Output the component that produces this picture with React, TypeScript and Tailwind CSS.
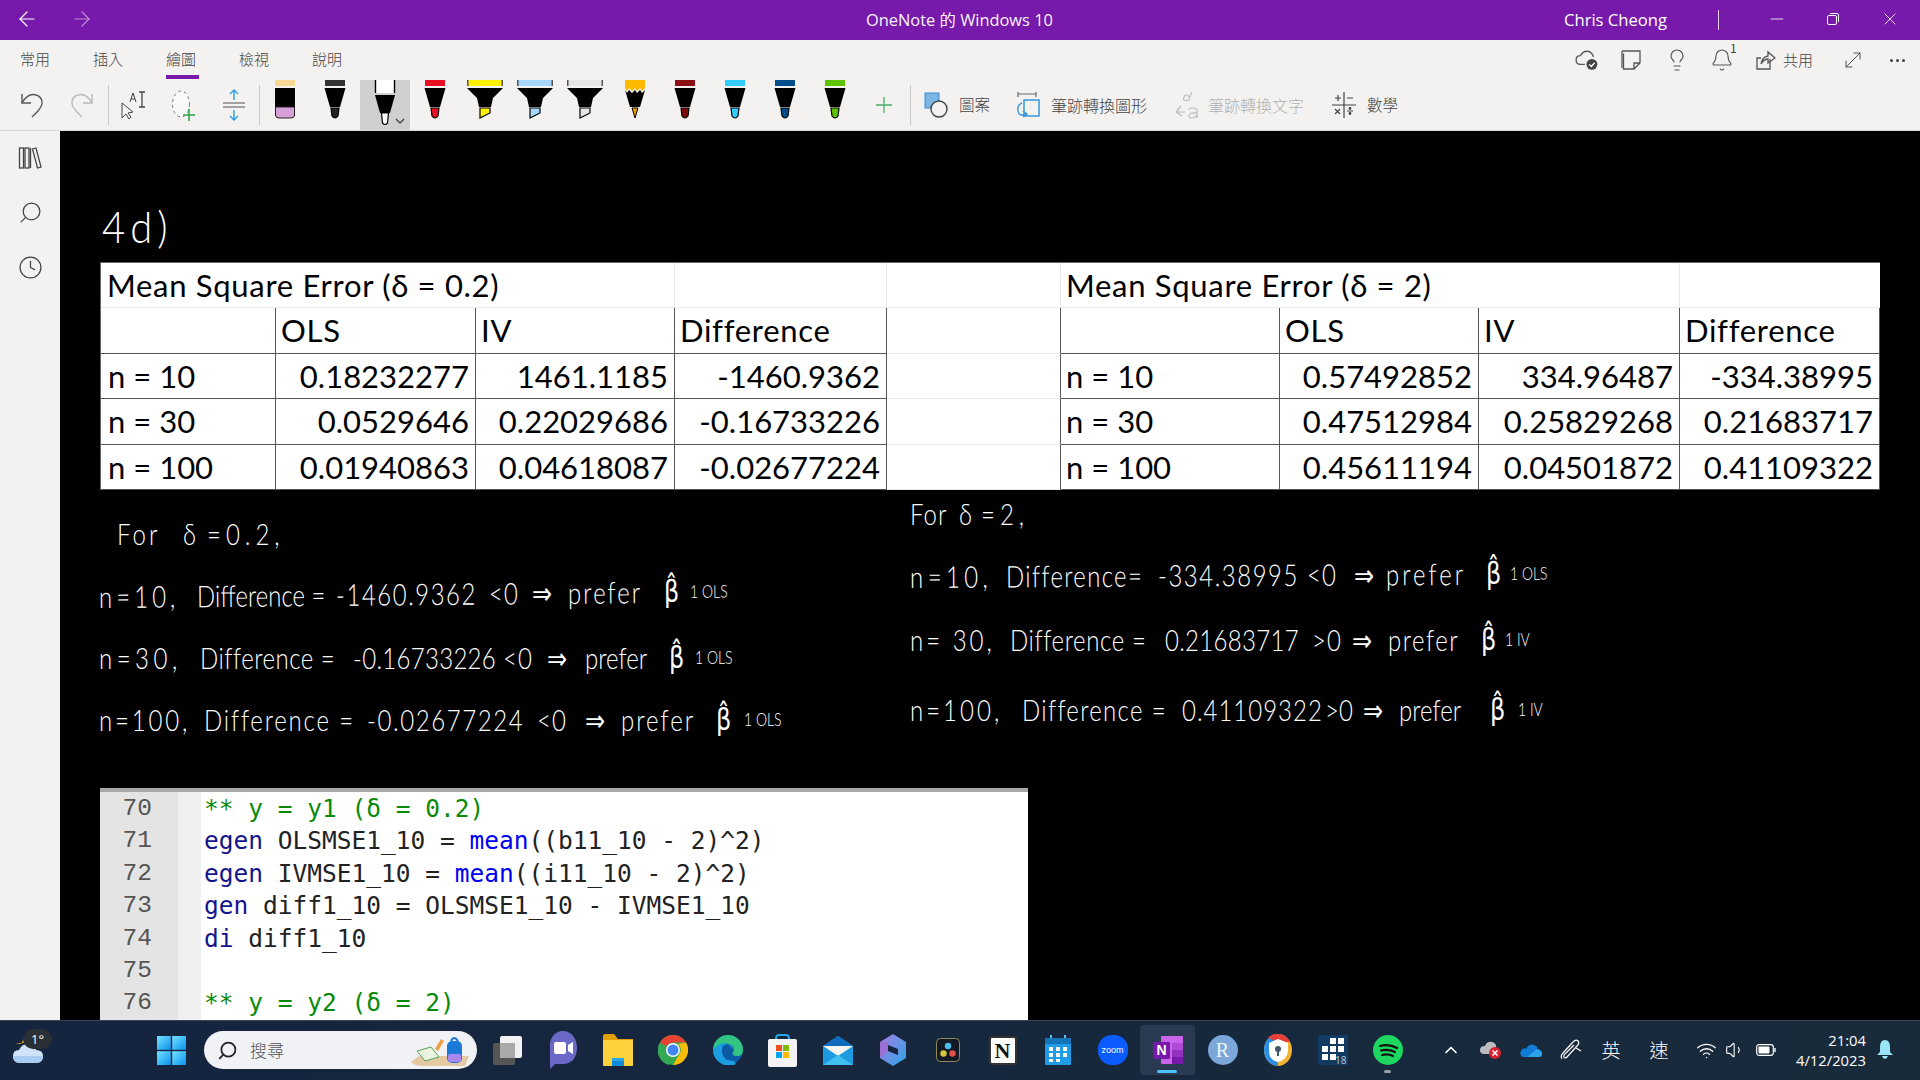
import React from "react";
import { ArrowLeft, ArrowRight, Search, Clock, Plus, X, Minus, Lightbulb, Bell, MoveDiagonal, ChevronUp, Wifi, Volume1 } from "lucide-react";

const cjk = "font-['Noto_Sans_CJK_TC','Noto_Sans',sans-serif]";
const ui = "font-['Open_Sans','Noto_Sans_CJK_TC',sans-serif]";

function PenBody({ color, tip }: { color: string; tip?: string }) {
  return (
    <svg width="50" height="50" viewBox="0 0 50 50">
      <rect x="15" y="0" width="20" height="6" fill={color} />
      <path d="M14.5 8H35.5L30 27H20Z" fill="#000" />
      <path d="M21 28H29L28 36Q25 40 22 36Z" fill={tip || color} stroke="#000" strokeWidth="1.2" />
    </svg>
  );
}
function Highlighter({ color }: { color: string }) {
  return (
    <svg width="50" height="50" viewBox="0 0 50 50">
      <rect x="7" y="0" width="36" height="6" fill={color} />
      <rect x="7" y="0" width="1.5" height="6" fill="#555" />
      <rect x="41.5" y="0" width="1.5" height="6" fill="#555" />
      <path d="M7 8H43L33 18L31 27H19L17 18Z" fill="#000" />
      <path d="M20 28H30V33L20 38Z" fill={color} stroke="#000" strokeWidth="1.2" />
    </svg>
  );
}
function Eraser() {
  return (
    <svg width="50" height="50" viewBox="0 0 50 50">
      <rect x="15" y="0" width="20" height="6" fill="#f7d794" />
      <rect x="15" y="8" width="20" height="19" fill="#000" />
      <path d="M15.5 27H34.5V35Q34.5 38 31 38H19Q15.5 38 15.5 35Z" fill="#d69fd8" stroke="#222" />
    </svg>
  );
}
function Pencil() {
  return (
    <svg width="50" height="50" viewBox="0 0 50 50">
      <path d="M15 0H35V8L32 11L30 8L27 11L25 8L22 11L19 8L17 11L15 8Z" fill="#ffb900" />
      <path d="M15 10L17 13L19 10L22 13L25 10L27 13L30 10L32 13L35 10L30 27H20Z" fill="#000" />
      <path d="M22 28H28L25 38Z" fill="#e8a000" stroke="#000" />
    </svg>
  );
}
function SelectedPen() {
  return (
    <div className="relative w-[50px] h-[50px] bg-[#cfcfcd]">
      <svg width="50" height="50" viewBox="0 0 50 50">
        <rect x="16" y="0" width="18" height="13" fill="#fff" />
        <path d="M15.5 0V13M34.5 0V13" stroke="#000" strokeWidth="1.4" />
        <path d="M15 15H35L30 33H20Z" fill="#000" />
        <path d="M21.5 33H28.5L27.5 43Q25 46 22.5 43Z" fill="#fff" stroke="#000" strokeWidth="1.2" />
        <path d="M36 39L40 43L44 39" fill="none" stroke="#444" strokeWidth="1.3" />
      </svg>
    </div>
  );
}
const Sep = () => <div className="w-px h-10 bg-[#c9c9c9]" />;

function Handwriting({ className, children }: { className: string; children: React.ReactNode }) {
  return (
    <div className={`absolute flex items-center whitespace-nowrap text-white font-['Lato',sans-serif] font-light text-[24px] leading-none scale-y-125 ${className}`}>
      {children}
    </div>
  );
}

const Beta = ({ className }: { className: string }) => (
  <span className={`font-['DejaVu_Sans',sans-serif] font-normal text-[24px] ${className}`}>{"β\u0302"}</span>
);

const Sub = ({ children }: { children: string }) => <span className="text-[14px]">{children}</span>;

function DataTable() {
  const dark = "border-r border-b border-[#555]";
  const pale = "border-r border-b border-[#e8e8e8]";
  const num = `${dark} text-right pr-[6px]`;
  const lab = `${dark} pl-[7px]`;
  const head = `${dark} pl-[5px] tracking-[0.7px]`;
  const left = [
    ["n = 10", "0.18232277", "1461.1185", "-1460.9362"],
    ["n = 30", "0.0529646", "0.22029686", "-0.16733226"],
    ["n = 100", "0.01940863", "0.04618087", "-0.02677224"],
  ];
  const right = [
    ["n = 10", "0.57492852", "334.96487", "-334.38995"],
    ["n = 30", "0.47512984", "0.25829268", "0.21683717"],
    ["n = 100", "0.45611194", "0.04501872", "0.41109322"],
  ];
  return (
    <div className="w-[1780px] bg-white text-black border-l border-t border-[#666] grid grid-cols-[175px_200px_199px_212px_174px_219px_199px_201px_200px] auto-rows-[45.4px] items-stretch text-[31px] leading-[44px] font-['Lato',sans-serif]">
      <div className={`col-span-3 pl-[6px] tracking-[0.7px] ${pale}`}>Mean Square Error (δ = 0.2)</div>
      <div className={pale} />
      <div className={pale} />
      <div className={`col-span-3 pl-[5px] tracking-[0.7px] ${pale}`}>Mean Square Error (δ = 2)</div>
      <div className="border-b border-[#e8e8e8]" />

      <div className={dark} />
      <div className={head}>OLS</div>
      <div className={head}>IV</div>
      <div className={head}>Difference</div>
      <div className={`${dark} border-b-[#e8e8e8]`} />
      <div className={dark} />
      <div className={head}>OLS</div>
      <div className={head}>IV</div>
      <div className={head}>Difference</div>

      {left.map((r, i) => (
        <React.Fragment key={r[0]}>
          <div className={lab}>{r[0]}</div>
          <div className={num}>{r[1]}</div>
          <div className={num}>{r[2]}</div>
          <div className={num}>{r[3]}</div>
          <div className={`${dark} border-b-[#e8e8e8]`} />
          <div className={`${dark} pl-[5px]`}>{right[i][0]}</div>
          <div className={num}>{right[i][1]}</div>
          <div className={num}>{right[i][2]}</div>
          <div className={num}>{right[i][3]}</div>
        </React.Fragment>
      ))}
    </div>
  );
}

function CodeImage() {
  const rows: [string, React.ReactNode][] = [
    ["70", <span className="text-[#0a8a0a]">** y = y1 (δ = 0.2)</span>],
    ["71", <><span className="text-[#14148c]">egen</span> OLSMSE1_10 = <span className="text-[#0000f0]">mean</span>((b11_10 - 2)^2)</>],
    ["72", <><span className="text-[#14148c]">egen</span> IVMSE1_10 = <span className="text-[#0000f0]">mean</span>((i11_10 - 2)^2)</>],
    ["73", <><span className="text-[#14148c]">gen</span> diff1_10 = OLSMSE1_10 - IVMSE1_10</>],
    ["74", <><span className="text-[#14148c]">di</span> diff1_10</>],
    ["75", ""],
    ["76", <span className="text-[#0a8a0a]">** y = y2 (δ = 2)</span>],
  ];
  return (
    <div className="mt-[298px] w-[928px] h-[240px] bg-white border-t-[4px] border-[#a8a8a8] flex font-['DejaVu_Sans_Mono',monospace] text-[24.5px] leading-[32.4px]">
      <div className="w-[78px] bg-[#e4e4e4] text-[#555] text-right pr-[26px] pt-[1px] font-['Liberation_Mono',monospace]">
        {rows.map((r) => <div key={r[0]} className="h-[32.4px]">{r[0]}</div>)}
      </div>
      <div className="w-[23px] bg-[#f0f0f0]" />
      <div className="pl-[3px] pt-[1px] text-[#222] whitespace-pre">
        {rows.map((r) => <div key={r[0]} className="h-[32.4px]">{r[1]}</div>)}
      </div>
    </div>
  );
}

function Ink() {
  return (
    <>
      <div className="absolute left-[42px] top-[70px] text-white font-['Lato',sans-serif] font-light text-[40px] leading-[50px] tracking-[5px] scale-y-110 whitespace-nowrap">4d)</div>

      <Handwriting className="left-[57px] top-[391px]">
        <span className="w-[66px] tracking-[3px]">For</span>
        <span className="w-[24px]">δ</span>
        <span className="tracking-[5px]">=0.2,</span>
      </Handwriting>
      <Handwriting className="left-[39px] top-[451px] -rotate-[0.5deg]">
        <span className="w-[98px] tracking-[4px]">n=10,</span>
        <span className="w-[139px]">Difference =</span>
        <span className="w-[153px] tracking-[1.5px]">-1460.9362</span>
        <span className="w-[43px] tracking-[1px]">&lt;0</span>
        <span className="w-[36px]">⇒</span>
        <span className="w-[96px] tracking-[2px]">prefer</span>
        <Beta className="w-[26px]" />
        <Sub>1 OLS</Sub>
      </Handwriting>
      <Handwriting className="left-[39px] top-[515px]">
        <span className="w-[101px] tracking-[4.5px]">n=30,</span>
        <span className="w-[153px] tracking-[0.5px]">Difference =</span>
        <span className="w-[150px] tracking-[0.3px]">-0.16733226</span>
        <span className="w-[44px] tracking-[1px]">&lt;0</span>
        <span className="w-[38px]">⇒</span>
        <span className="w-[84px]">prefer</span>
        <Beta className="w-[26px]" />
        <Sub>1 OLS</Sub>
      </Handwriting>
      <Handwriting className="left-[39px] top-[577px]">
        <span className="w-[105px] tracking-[2.8px]">n=100,</span>
        <span className="w-[163px] tracking-[1.8px]">Difference =</span>
        <span className="w-[170px] tracking-[1.6px]">-0.02677224</span>
        <span className="w-[48px] tracking-[1px]">&lt;0</span>
        <span className="w-[36px]">⇒</span>
        <span className="w-[95px] tracking-[2px]">prefer</span>
        <Beta className="w-[28px]" />
        <Sub>1 OLS</Sub>
      </Handwriting>

      <Handwriting className="left-[850px] top-[371px]">
        <span className="w-[49px] tracking-[1px]">For</span>
        <span className="w-[22px]">δ</span>
        <span className="tracking-[5px]">=2,</span>
      </Handwriting>
      <Handwriting className="left-[850px] top-[432px] -rotate-[0.3deg]">
        <span className="w-[96px] tracking-[4.4px]">n=10,</span>
        <span className="w-[152px] tracking-[1.3px]">Difference=</span>
        <span className="w-[149px] tracking-[1.5px]">-334.38995</span>
        <span className="w-[47px] tracking-[1px]">&lt;0</span>
        <span className="w-[32px]">⇒</span>
        <span className="w-[100px] tracking-[3px]">prefer</span>
        <Beta className="w-[24px]" />
        <Sub>1 OLS</Sub>
      </Handwriting>
      <Handwriting className="left-[850px] top-[497px]">
        <span className="w-[100px] tracking-[3px]">n= 30,</span>
        <span className="w-[155px] tracking-[0.6px]">Difference =</span>
        <span className="w-[147px] tracking-[0.3px]">0.21683717</span>
        <span className="w-[40px] tracking-[1px]">&gt;0</span>
        <span className="w-[36px]">⇒</span>
        <span className="w-[93px] tracking-[1.5px]">prefer</span>
        <Beta className="w-[24px]" />
        <Sub>1 IV</Sub>
      </Handwriting>
      <Handwriting className="left-[850px] top-[567px]">
        <span className="w-[112px] tracking-[3px]">n=100,</span>
        <span className="w-[160px] tracking-[1.3px]">Difference =</span>
        <span className="w-[143px] tracking-[1px]">0.41109322</span>
        <span className="w-[38px]">&gt;0</span>
        <span className="w-[36px]">⇒</span>
        <span className="w-[91px]">prefer</span>
        <Beta className="w-[28px]" />
        <Sub>1 IV</Sub>
      </Handwriting>
    </>
  );
}

const Tab = ({ label, active }: { label: string; active?: boolean }) => (
  <div className="relative w-[73px] h-[40px] flex items-center text-[15px] text-[#444] font-light pb-[2px]">
    {label}
    {active && <div className="absolute left-0 bottom-[1px] w-[33px] h-[4px] bg-[#7719aa]" />}
  </div>
);

const AppSlot = ({ children, active, dot }: { children: React.ReactNode; active?: boolean; dot?: boolean }) => (
  <div className={`relative w-[55px] h-[50px] flex items-center justify-center rounded-[4px] ${active ? "bg-[#2a3a52]" : ""}`}>
    {children}
    {active && <div className="absolute bottom-[2px] left-[17px] w-[20px] h-[3px] rounded-full bg-[#4cc2ff]" />}
    {dot && <div className="absolute bottom-[2px] left-[24px] w-[7px] h-[3px] rounded-full bg-[#9aa0a8]" />}
  </div>
);

export default function App() {
  return (
    <div className={`w-[1920px] h-[1080px] flex flex-col overflow-hidden bg-black ${ui}`}>
      {/* Title bar */}
      <div className="h-[40px] shrink-0 bg-[#7719aa] flex items-center text-white">
        <ArrowLeft className="ml-[15px] w-[24px] h-[24px] -mt-[2px]" strokeWidth={1.2} />
        <ArrowRight className="ml-[31px] w-[24px] h-[24px] -mt-[2px] opacity-50" strokeWidth={1.2} />
        <div className="ml-[772px] w-[190px] text-[16.4px] font-normal whitespace-nowrap opacity-95">OneNote 的 Windows 10</div>
        <div className="ml-[508px] w-[102px] text-[16.6px] whitespace-nowrap">Chris Cheong</div>
        <div className="ml-[52px] w-px h-[20px] bg-white/80" />
        <Minus className="ml-[48px] w-[20px] h-[20px] -mt-[3px]" strokeWidth={1} />
        <svg className="ml-[39px] -mt-[3px]" width="14" height="14" viewBox="0 0 14 14" fill="none" stroke="#fff" strokeWidth="1"><rect x="1.5" y="3.5" width="9" height="9" rx="1.5" /><path d="M4 1.5H11Q12.5 1.5 12.5 3V10" /></svg>
        <X className="ml-[40px] w-[20px] h-[20px] -mt-[3px]" strokeWidth={1} />
      </div>

      {/* Ribbon tabs */}
      <div className={`h-[40px] shrink-0 bg-[#f3f2f1] flex items-center pl-[20px] pr-[11px] ${cjk}`}>
        <Tab label="常用" /><Tab label="插入" /><Tab label="繪圖" active /><Tab label="檢視" /><Tab label="說明" />
        <div className="flex-1" />
        <div className="w-[44px] flex justify-center">
          <svg width="24" height="22" viewBox="0 0 22 20" fill="none" stroke="#555" strokeWidth="1.2"><path d="M9 14H5Q1 14 1 10T5 6Q7 2 11 2T17 7" /><circle cx="15.5" cy="14" r="5" fill="#444" stroke="none" /><path d="M13 14L15 16L18 12.5" stroke="#fff" strokeWidth="1.2" /></svg>
        </div>
        <div className="w-[44px] flex justify-center">
          <svg width="20" height="20" viewBox="0 0 20 20" fill="none" stroke="#555" strokeWidth="1.3"><path d="M1 1H19V13L13 19H2.5V3.5M13 19V13H19" /><path d="M1 1V18" /></svg>
        </div>
        <div className="w-[47px] flex justify-center"><Lightbulb className="w-[24px] h-[24px] text-[#555]" strokeWidth={1.2} /></div>
        <div className="relative w-[44px] flex justify-center">
          <Bell className="w-[24px] h-[24px] text-[#555]" strokeWidth={1.1} />
          <span className="absolute left-[30px] -top-[9px] text-[12px] text-[#444]">1</span>
        </div>
        <svg className="ml-[12px]" width="20" height="20" viewBox="0 0 20 20" fill="none" stroke="#555" strokeWidth="1.3"><path d="M14 9V19H1V8H5" /><path d="M5 14Q6 7 12 6V2L19 8L12 13V9Q8 9 5 14Z" /></svg>
        <div className="ml-[7px] w-[30px] text-[15px] text-[#444] font-light whitespace-nowrap">共用</div>
        <MoveDiagonal className="ml-[28px] w-[24px] h-[24px] text-[#555]" strokeWidth={1} />
        <div className="ml-[20px] w-[24px] flex justify-center gap-[3px]"><i className="w-[3px] h-[3px] rounded-full bg-[#444]" /><i className="w-[3px] h-[3px] rounded-full bg-[#444]" /><i className="w-[3px] h-[3px] rounded-full bg-[#444]" /></div>
      </div>

      {/* Toolbar */}
      <div className={`h-[50px] shrink-0 bg-[#f3f2f1] flex items-center pl-[7px] ${cjk}`}>
        <div className="w-[50px] flex justify-center">
          <svg width="26" height="26" viewBox="0 0 26 26" fill="none" stroke="#555" strokeWidth="1.4"><path d="M3 2V11H12" /><path d="M3 11Q8 2 15 2.5Q24 4 23 12Q22.5 15 19 19L13 25" /></svg>
        </div>
        <div className="w-[50px] flex justify-center">
          <svg width="26" height="26" viewBox="0 0 26 26" fill="none" stroke="#b8b8b8" strokeWidth="1.4"><path d="M23 2V11H14" /><path d="M23 11Q18 2 11 2.5Q2 4 3 12Q3.5 15 7 19L13 25" /></svg>
        </div>
        <div className="ml-px"><Sep /></div>
        <div className="w-[50px] flex justify-center">
          <svg width="28" height="30" viewBox="0 0 28 30" fill="none" stroke="#444" strokeWidth="1"><path d="M2 13V28L6 24L9 29L11 27L8 23L13 22Z" /><path d="M10 12L13 3L16 12M11 9H15" /><path d="M22 2V17M19 2H25M19 17H25" strokeWidth="1.3" /></svg>
        </div>
        <div className="w-[50px] flex justify-center">
          <svg width="26" height="32" viewBox="0 0 26 32" fill="none"><ellipse cx="10" cy="15" rx="8.5" ry="13" fill="#f9f9f9" stroke="#777" strokeDasharray="3 3" /><path d="M18 20V32M12 26H24" stroke="#2da44e" strokeWidth="1.6" /></svg>
        </div>
        <div className="w-[50px] flex justify-center">
          <svg width="24" height="32" viewBox="0 0 24 32" fill="none"><path d="M12 1V11M8 5L12 1L16 5M12 21V31M8 27L12 31L16 27" stroke="#2b9fe0" strokeWidth="1.4" /><path d="M1 14H23M1 18H23" stroke="#888" strokeWidth="1.6" /></svg>
        </div>
        <Sep />
        <Eraser />
        <PenBody color="#333" tip="#222" />
        <SelectedPen />
        <PenBody color="#e81123" />
        <Highlighter color="#fff100" />
        <Highlighter color="#a6d8ff" />
        <Highlighter color="#e6e6e6" />
        <Pencil />
        <PenBody color="#8c0f16" tip="#7a0a0a" />
        <PenBody color="#33ccff" />
        <PenBody color="#004e8c" />
        <PenBody color="#5ec400" />
        <div className="w-[50px] flex justify-center"><Plus className="w-[26px] h-[26px] text-[#4caf6a] -ml-[2px]" strokeWidth={1.2} /></div>
        <Sep />
        <div className="ml-[13px] w-[92px] flex items-center">
          <svg width="24" height="28" viewBox="0 0 24 28"><rect x="1" y="2" width="14" height="15" fill="#7db4e6" stroke="#3a8ad0" /><circle cx="15" cy="18" r="8" fill="#f3f2f1" stroke="#444" strokeWidth="1.4" /></svg>
          <span className="ml-[11px] text-[15.5px] text-[#444] font-light whitespace-nowrap">圖案</span>
        </div>
        <div className="w-[159px] flex items-center">
          <svg width="24" height="28" viewBox="0 0 24 28" fill="none"><path d="M2 1V6M20 1V6M2 3H20" stroke="#666" strokeWidth="1.2" /><rect x="8" y="9" width="15" height="16" stroke="#3a96d8" strokeWidth="1.5" /><path d="M6 12Q1 14 2 20T10 23M7 20L11 23L7 26" stroke="#3a96d8" strokeWidth="1.4" /></svg>
          <span className="ml-[11px] text-[16px] text-[#444] font-light whitespace-nowrap">筆跡轉換圖形</span>
        </div>
        <div className="w-[157px] flex items-center">
          <svg width="24" height="30" viewBox="0 0 24 30" fill="none" stroke="#bbb" strokeWidth="1.2"><path d="M15 8Q11 2 9 7T14 10Q15 5 17 2" /><path d="M1 22L6 16M1 22L7 26M1 22H10" /><path d="M22 28V21Q22 18 18 18T14 20M22 23Q14 22 14 26T22 26" /></svg>
          <span className="ml-[9px] text-[16px] text-[#b0b0b0] font-light whitespace-nowrap">筆跡轉換文字</span>
        </div>
        <div className="w-[70px] flex items-center">
          <svg width="24" height="26" viewBox="0 0 24 26" fill="none" stroke="#444" strokeWidth="1.2"><path d="M12 0V26M0 13H24M3 6H9M6 3V9M15 6H21M3 17L8 22M8 17L3 22M15 19H21" /><circle cx="18" cy="16.5" r=".8" fill="#444" /><circle cx="18" cy="21.5" r=".8" fill="#444" /></svg>
          <span className="ml-[11px] text-[15.5px] text-[#444] font-light whitespace-nowrap">數學</span>
        </div>
      </div>
      <div className="h-px shrink-0 bg-[#d6d6d6]" />

      {/* Main */}
      <div className="flex-1 min-h-0 flex">
        <div className="w-[60px] shrink-0 bg-[#f3f2f1] flex flex-col items-center pt-[15px] gap-[30px]">
          <svg width="24" height="24" viewBox="0 0 24 24" fill="none" stroke="#444" strokeWidth="1.3"><rect x="1.5" y="2" width="4" height="20" /><rect x="7" y="2" width="4" height="20" /><path d="M12.5 2V22" /><path d="M14.5 3L18 2L23 21L19.5 22Z" /></svg>
          <Search className="w-[25px] h-[25px] text-[#444] -scale-x-100" strokeWidth={1.2} />
          <Clock className="w-[25px] h-[25px] text-[#444]" strokeWidth={1.2} />
        </div>
        <div className="relative flex-1 min-w-0 overflow-hidden bg-black pl-[40px] pt-[131px]">
          <Ink />
          <DataTable />
          <CodeImage />
        </div>
      </div>

      {/* Taskbar */}
      <div className="h-[60px] shrink-0 bg-gradient-to-r from-[#15243f] to-[#182b3b] border-t border-[#3a4656] flex items-center pb-[1px]">
        <div className="relative w-[56px] h-[50px]">
          <svg className="absolute left-[12px] top-[10px]" width="32" height="28" viewBox="0 0 32 28">
            <path d="M3 8L9 9L12 3L14 8Z" fill="#f7a01d" />
            <path d="M7 28Q1 27 1 21T7 15Q10 8 17 9T24 15Q31 15 31 21T25 28Z" fill="#cfe2f7" />
            <path d="M7 28Q1 27 1 21H31Q31 27 25 28Z" fill="#a8cdf0" />
          </svg>
          <div className="absolute left-[23px] top-[4px] w-[29px] h-[20px] rounded-full bg-[#2b2f36] text-white text-[13px] leading-[20px] text-center">1°</div>
        </div>
        <svg className="ml-[101px]" width="29" height="29" viewBox="0 0 29 29">
          <defs><linearGradient id="win" x1="0" y1="0" x2="1" y2="1"><stop offset="0" stopColor="#75e4ff" /><stop offset="1" stopColor="#0a90ef" /></linearGradient></defs>
          <rect width="13.8" height="13.8" fill="url(#win)" /><rect x="15.2" width="13.8" height="13.8" fill="url(#win)" /><rect y="15.2" width="13.8" height="13.8" fill="url(#win)" /><rect x="15.2" y="15.2" width="13.8" height="13.8" fill="url(#win)" />
        </svg>
        <div className="ml-[18px] w-[273px] h-[38px] rounded-full bg-[#f0f2f5] flex items-center pl-[13px] relative">
          <Search className="w-[21px] h-[21px] text-[#222] -scale-x-100" strokeWidth={2} />
          <span className={`ml-[12px] text-[17px] text-[#555] font-light ${cjk}`}>搜尋</span>
          <svg className="absolute right-[6px] top-[4px]" width="60" height="32" viewBox="0 0 60 32">
            <path d="M0 27L8 21H58L54 31H12Q4 31 0 27Z" fill="#e5c9a0" />
            <path d="M6 16L20 12L28 22L14 26Z" fill="#eaf3e0" stroke="#5aa05a" />
            <path d="M24 14L30 4L33 6L27 16Z" fill="#f2a045" />
            <rect x="36" y="6" width="15" height="22" rx="5" fill="#1a78d8" />
            <path d="M40 6Q43 0 47 6" fill="none" stroke="#1a78d8" strokeWidth="2" />
            <rect x="37" y="19" width="13" height="8" rx="2" fill="#a888ee" />
          </svg>
        </div>
        <div className="ml-[3px] flex items-center">
          <AppSlot><svg width="31" height="31" viewBox="0 0 31 31"><rect x="1" y="8" width="22" height="22" rx="2" fill="#555" /><rect x="8" y="1" width="22" height="22" rx="2" fill="#f2f2f2" /><rect x="8" y="8" width="15" height="15" fill="#aaa" /></svg></AppSlot>
          <AppSlot><svg width="30" height="38" viewBox="0 0 30 38"><path d="M15 0C24 0 29 8 29 17S24 33 15 33H7L2 38V17C1 8 6 0 15 0Z" fill="#6b69c6" /><rect x="6" y="11" width="12" height="12" rx="2" fill="#fff" /><path d="M20 14L25 11V23L20 20Z" fill="#fff" /></svg></AppSlot>
          <AppSlot><svg width="30" height="32" viewBox="0 0 30 32"><path d="M0 2Q0 0 2 0H11L15 5H30V10H0Z" fill="#e0a100" /><rect y="6" width="30" height="26" rx="1" fill="#fbd13c" /><rect x="9" y="26" width="12" height="6" fill="#0f8ad8" /><path d="M9 24H21V27H9Z" fill="#29a3ec" /></svg></AppSlot>
          <AppSlot><svg width="30" height="30" viewBox="0 0 30 30"><circle cx="15" cy="15" r="15" fill="#34a853" /><path d="M15 0A15 15 0 0 1 28 7.5L15 7.5A7.5 7.5 0 0 0 8.5 11.2L2 7.5A15 15 0 0 1 15 0Z" fill="#ea4335" /><path d="M2 7.5L8.5 19L11 30A15 15 0 0 1 2 7.5Z" fill="#34a853" /><path d="M28 7.5A15 15 0 0 1 15 30L21.5 19A7.5 7.5 0 0 0 20 9Z" fill="#fbbc04" /><circle cx="15" cy="15" r="7" fill="#fff" /><circle cx="15" cy="15" r="5.5" fill="#4285f4" /></svg></AppSlot>
          <AppSlot><svg width="30" height="30" viewBox="0 0 30 30"><circle cx="15" cy="15" r="15" fill="#0c59a4" /><path d="M0 15A15 15 0 0 1 30 15Q30 21 24 21Q17 21 21 15Q21 9 14 9Q4 9 0 15Z" fill="#33c481" /><path d="M21 15Q19 9 14 9Q8 10 9 17Q10 26 21 26L23 29A15 15 0 0 1 9 29Q0 24 0 15Q4 8 14 8" fill="#1b9de2" /></svg></AppSlot>
          <AppSlot><svg width="29" height="33" viewBox="0 0 29 33"><path d="M8 5Q8 1 11 1H18Q21 1 21 5" fill="none" stroke="#26a8e6" strokeWidth="2" /><rect y="5" width="29" height="28" rx="2" fill="#f4f4f4" /><rect x="8" y="11" width="6" height="6" fill="#f25022" /><rect x="15" y="11" width="6" height="6" fill="#7fba00" /><rect x="8" y="18" width="6" height="6" fill="#00a4ef" /><rect x="15" y="18" width="6" height="6" fill="#ffb900" /></svg></AppSlot>
          <AppSlot><svg width="30" height="29" viewBox="0 0 30 29"><path d="M0 10L15 0L30 10V29H0Z" fill="#1d9be0" /><path d="M0 10L15 20L30 10H0Z" fill="#f0f0f0" /><path d="M0 10L15 0L30 10Z" fill="#0f6cbd" /><path d="M4 10H26L15 17Z" fill="#f5f5f5" /><path d="M0 29L15 19L30 29Z" fill="#3ec0f0" /></svg></AppSlot>
          <AppSlot><svg width="26" height="32" viewBox="0 0 26 32"><defs><linearGradient id="m365" x1="0" y1="0" x2="1" y2="1"><stop offset="0" stopColor="#a77de0" /><stop offset="1" stopColor="#2ca5e8" /></linearGradient></defs><path d="M13 0L26 8V24L13 32L0 24V8Z" fill="url(#m365)" /><path d="M8 11L18 15V21L8 17Z" fill="#15243f" /><path d="M0 24L8 17V8L0 8Z" fill="#9b6fd4" /></svg></AppSlot>
          <AppSlot><svg width="24" height="24" viewBox="0 0 24 24"><rect x=".5" y=".5" width="23" height="23" rx="4" fill="#141a24" stroke="#8f8a60" /><circle cx="12" cy="8" r="3.2" fill="#4ac0e8" /><circle cx="7.5" cy="15.5" r="3.2" fill="#d7c640" /><circle cx="16.5" cy="15.5" r="3.2" fill="#e2504c" /></svg></AppSlot>
          <AppSlot><div className="w-[28px] h-[29px] bg-white border-[2px] border-[#333] rounded-[3px] text-[#111] text-[22px] leading-[25px] text-center font-bold font-['Liberation_Serif',serif]">N</div></AppSlot>
          <AppSlot><svg width="26" height="30" viewBox="0 0 26 30"><path d="M6 0V6M20 0V6" stroke="#5bbcf0" strokeWidth="2" /><rect y="3" width="26" height="27" rx="1" fill="#1f9ce8" /><rect y="3" width="26" height="6" fill="#1374b8" /><g fill="#fff"><rect x="4" y="12" width="4" height="4" /><rect x="11" y="12" width="4" height="4" /><rect x="18" y="12" width="4" height="4" /><rect x="4" y="18" width="4" height="4" /><rect x="11" y="18" width="4" height="4" /><rect x="18" y="18" width="4" height="4" /><rect x="4" y="24" width="4" height="3" /><rect x="11" y="24" width="4" height="3" /></g></svg></AppSlot>
          <AppSlot><div className="w-[30px] h-[30px] rounded-[14px] bg-[#0b5cff] text-white text-[9px] leading-[30px] text-center font-['Liberation_Sans',sans-serif]">zoom</div></AppSlot>
          <AppSlot active><svg width="30" height="30" viewBox="0 0 30 30"><rect x="8" y="1" width="22" height="28" rx="1" fill="#ca64ea" /><rect x="19" y="8" width="11" height="7" fill="#ae4bd5" /><rect x="19" y="15" width="11" height="7" fill="#9332bf" /><rect x="19" y="22" width="11" height="7" fill="#7719aa" /><rect y="7" width="17" height="17" rx="1" fill="#7719aa" /><text x="8.5" y="20" textAnchor="middle" fontSize="14" fontWeight="700" fill="#fff" fontFamily="Liberation Sans">N</text></svg></AppSlot>
          <AppSlot><div className="w-[30px] h-[30px] rounded-full bg-[#7ba7d9] text-[#eef4fb] text-[20px] leading-[30px] text-center font-['Liberation_Serif',serif]">R</div></AppSlot>
          <AppSlot><svg width="28" height="32" viewBox="0 0 28 32"><ellipse cx="14" cy="16" rx="14" ry="16" fill="#f2b233" /><path d="M14 0A14 16 0 0 0 0 16A14 16 0 0 0 14 32Z" fill="#2a8fe8" /><path d="M4 4A14 16 0 0 1 26 8L14 8Z" fill="#e5403a" /><path d="M14 5L24 9V17Q23 26 14 28Q5 26 5 17V9Z" fill="#fff" /><circle cx="14" cy="15" r="3" fill="#456" /><rect x="13" y="16" width="2" height="6" fill="#456" /></svg></AppSlot>
          <AppSlot><div className="relative w-[30px] h-[30px] bg-[#123a63]"><div className="absolute left-[4px] top-[3px] grid grid-cols-3 gap-[2px]"><i className="w-[6px] h-[6px]" /><i className="w-[6px] h-[6px] bg-white" /><i className="w-[6px] h-[6px] bg-white" /><i className="w-[6px] h-[6px] bg-white" /><i className="w-[6px] h-[6px] bg-white" /><i className="w-[6px] h-[6px] bg-white" /><i className="w-[6px] h-[6px] bg-white" /><i className="w-[6px] h-[6px] bg-white" /></div><span className="absolute right-[1px] bottom-0 text-[10px] leading-[10px] text-[#bcd]">18</span></div></AppSlot>
          <AppSlot dot><svg width="30" height="30" viewBox="0 0 30 30" fill="none"><circle cx="15" cy="15" r="15" fill="#1ed760" /><path d="M7 11Q16 8.5 24 13M8 15.5Q15 13.5 22 17M9 20Q15 18.5 20 21" stroke="#111" strokeWidth="2.2" strokeLinecap="round" /></svg></AppSlot>
        </div>
        <div className="ml-[16px] w-[40px] flex justify-center"><ChevronUp className="w-[20px] h-[20px] text-white" strokeWidth={2} /></div>
        <div className="w-[40px] flex justify-center"><svg width="22" height="18" viewBox="0 0 22 18"><path d="M4 13Q0 13 0 9T5 5Q7 0 12 1T16 8V13Z" fill="#b9bcc0" /><circle cx="15" cy="12" r="6" fill="#d9202e" /><path d="M12.5 9.5L17.5 14.5M17.5 9.5L12.5 14.5" stroke="#fff" strokeWidth="1.5" /></svg></div>
        <div className="w-[40px] flex justify-center"><svg width="22" height="14" viewBox="0 0 22 14"><path d="M3 14Q-1 12 1 8T6 6Q9 0 14 2T17 6Q22 7 22 10.5T19 14Z" fill="#0f7bd4" /><path d="M7 14L17 6Q22 7 22 10.5T19 14Z" fill="#2ea3ea" /></svg></div>
        <div className="w-[40px] flex justify-center"><svg width="22" height="22" viewBox="0 0 22 22" fill="none" stroke="#fff" strokeWidth="1.2"><path d="M2 20Q0 17 3 14L13 3Q16 0 18 2T17 7L7 18Q5 20 4 18T6 14L14 6" /><path d="M16 9L21 12" /></svg></div>
        <div className={`w-[40px] text-center text-white text-[19px] font-light ${cjk}`}>英</div>
        <div className={`w-[56px] text-center text-white text-[19px] font-light ${cjk}`}>速</div>
        <div className="w-[38px] flex justify-center"><Wifi className="w-[21px] h-[21px] text-white" strokeWidth={1.5} /></div>
        <div className="w-[20px] flex justify-center"><Volume1 className="w-[20px] h-[20px] text-white" strokeWidth={1.3} /></div>
        <div className="w-[42px] flex justify-center"><svg width="20" height="12" viewBox="0 0 20 12" fill="none"><rect x=".7" y=".7" width="16.6" height="10.6" rx="2.5" stroke="#fff" strokeWidth="1.2" /><rect x="2.5" y="2.5" width="11" height="7" rx="1" fill="#fff" /><path d="M19 4V8" stroke="#fff" strokeWidth="1.4" /></svg></div>
        <div className="w-[79px] text-right text-white text-[14.8px] leading-[20px] whitespace-nowrap">
          <div>21:04</div>
          <div>4/12/2023</div>
        </div>
        <div className="w-[38px] flex justify-center"><svg width="16" height="20" viewBox="0 0 16 20"><path d="M8 0Q13 0 13 7V12L16 15H0L3 12V7Q3 0 8 0Z" fill="#9be4f7" /><path d="M5 16H11Q10 19 8 19T5 16Z" fill="#9be4f7" /></svg></div>
      </div>
    </div>
  );
}
